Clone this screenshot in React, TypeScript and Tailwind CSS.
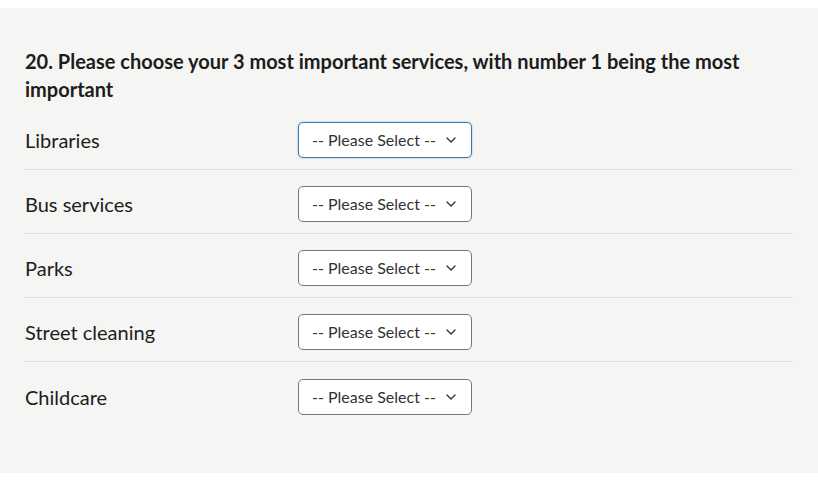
import React from 'react';

const services = ['Libraries', 'Bus services', 'Parks', 'Street cleaning', 'Childcare'];

const Chevron: React.FC = () => (
  <svg width="12" height="12" viewBox="0 0 12 12" fill="none" className="shrink-0">
    <path d="M2 4 L6 8 L10 4" stroke="#333" strokeWidth="1.4" strokeLinecap="round" strokeLinejoin="round" />
  </svg>
);

const App: React.FC = () => {
  return (
    <div className="min-h-screen bg-white py-2" style={{ fontFamily: 'Lato, "Open Sans", sans-serif' }}>
      <div className="bg-[#f5f5f3] px-[25px] pt-[39px] pb-[47px] text-[#1c1c1c]">
        <h2 className="text-[20px] font-bold leading-[28px] pr-10">
          20. Please choose your 3 most important services, with number 1 being the most important
        </h2>
        <div className="mt-[3px]">
          {services.map((name, i) => (
            <div
              key={name}
              className={`flex items-center h-[64px] ${i < services.length - 1 ? 'border-b border-[#dcdcdc]' : ''}`}
            >
              <div className="w-[273px] text-[20px] mt-[5px]">{name}</div>
              <div
                className={`mt-[5px] flex items-center justify-between w-[174px] h-[36px] rounded-[5px] bg-white pl-[13px] pr-[14px] text-[16px] text-[#333] border ${
                  i === 0 ? 'border-[#3a78b0] shadow-[0_0_2px_rgba(58,120,176,0.5)]' : 'border-[#777]'
                }`}
              >
                <span>-- Please Select --</span>
                <Chevron />
              </div>
            </div>
          ))}
        </div>
      </div>
    </div>
  );
};

export default App;
